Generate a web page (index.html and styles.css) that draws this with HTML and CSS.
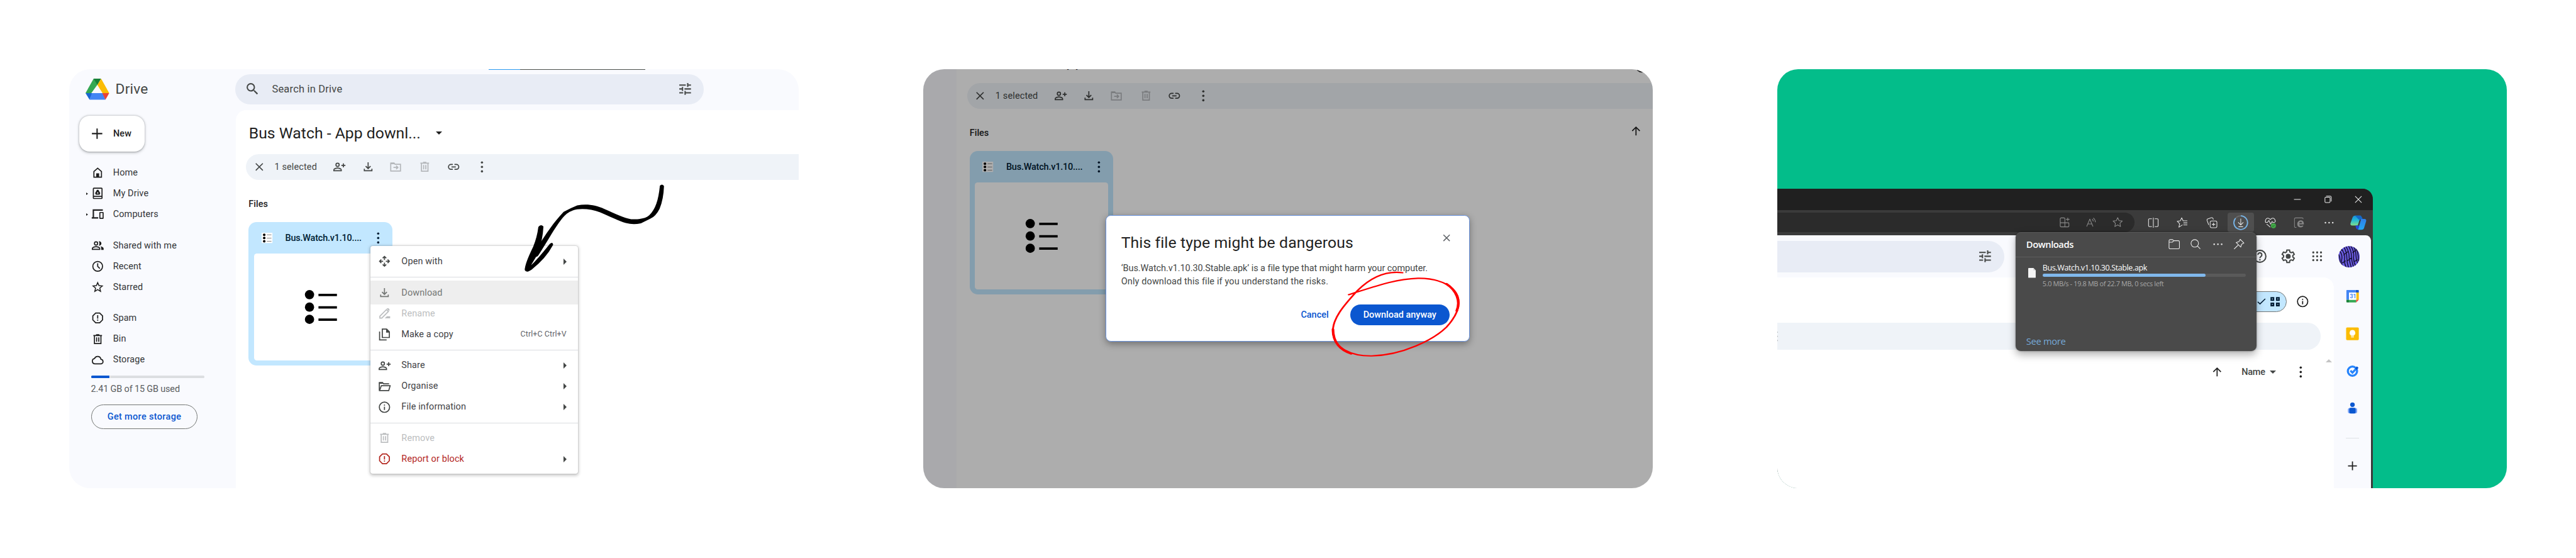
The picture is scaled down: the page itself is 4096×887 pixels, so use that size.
FILE: index.html
```
<!DOCTYPE html>
<html lang="en">
<head>
<meta charset="utf-8">
<title>Bus Watch download guide</title>
<link rel="stylesheet" href="styles.css">
</head>
<body>
<svg class="sprite" width="0" height="0" aria-hidden="true">
  <defs>
    <symbol id="search" viewBox="0 0 24 24"><path d="M15.5 14h-.79l-.28-.27A6.471 6.471 0 0 0 16 9.5 6.5 6.5 0 1 0 9.5 16c1.61 0 3.09-.59 4.23-1.57l.27.28v.79l5 4.99L20.49 19l-4.99-5zm-6 0C7.01 14 5 11.99 5 9.5S7.01 5 9.5 5 14 7.01 14 9.5 11.99 14 9.5 14z"/></symbol>
    <symbol id="tune" viewBox="0 0 24 24"><path d="M3 17v2h6v-2H3zM3 5v2h10V5H3zm10 16v-2h8v-2h-8v-2h-2v6h2zM7 9v2H3v2h4v2h2V9H7zm14 4v-2H11v2h10zm-6-4h2V7h4V5h-4V3h-2v6z"/></symbol>
    <symbol id="plus" viewBox="0 0 24 24"><path d="M12 4v16M4 12h16" class="s2"/></symbol>
    <symbol id="close" viewBox="0 0 24 24"><path d="M5.5 5.5l13 13M18.500 5.500l-13 13" class="s2"/></symbol>
    <symbol id="home" viewBox="0 0 24 24"><path d="M5 20.500V10l7-6 7 6v10.500z" class="s2"/><path d="M9.300 13.500h5.400V20.500H9.300z"/></symbol>
    <symbol id="mydrive" viewBox="0 0 24 24"><rect x="4" y="2.500" width="16" height="19" rx="1" class="s2"/><path d="M4 17.500h16" class="s2"/><path fill-rule="evenodd" d="M10.700 5.500h2.600l3.500 6-1.300 3h-7l-1.300-3zm1.300 3.700l-1.600 2.900h3.200z"/></symbol>
    <symbol id="computers" viewBox="0 0 24 24"><path d="M21.500 4.500H4v14M1 19h12" class="s25"/><rect x="16" y="9" width="6" height="11" rx=".6" class="s2"/></symbol>
    <symbol id="people" viewBox="0 0 24 24"><circle cx="9" cy="8.200" r="3" class="s2"/><path d="M2.200 19v-1.600c0-2.100 4.500-3.200 6.800-3.200s6.800 1.100 6.800 3.200V19z" class="s2"/><path d="M14 4.300a4 4 0 1 1 0 7.800c1.600-2 1.600-5.800 0-7.800zM17 13.500c3 .5 6 1.800 6 4V20h-4.500v-2.500c0-1.700-.5-3-1.500-4z"/></symbol>
    <symbol id="clock" viewBox="0 0 24 24"><circle cx="12" cy="12" r="9" class="s2"/><path d="M12 6.500V12l4 4" class="s2"/></symbol>
    <symbol id="star" viewBox="0 0 24 24"><path d="M12 3.700l2.400 5.700 6.100.5-4.600 4 1.400 6-5.300-3.200L6.700 19.900l1.400-6-4.600-4 6.100-.5z" class="s18"/></symbol>
    <symbol id="spam" viewBox="0 0 24 24"><path d="M8.300 3h7.400L21 8.300v7.400L15.700 21H8.300L3 15.700V8.300z" class="s2"/><path d="M11 7h2v6.500h-2zM11 15h2v2h-2z"/></symbol>
    <symbol id="trash" viewBox="0 0 24 24"><path d="M4 5h16M9 3.700h6M6 5v15h12V5M10 8.500v8M14 8.500v8" class="s2"/></symbol>
    <symbol id="cloud" viewBox="0 0 24 24"><path d="M7 19a5 5 0 0 1-.8-9.900 6.200 6.200 0 0 1 11.800 1.600A4.200 4.200 0 0 1 18.500 19z" class="s2"/></symbol>
    <symbol id="personadd" viewBox="0 0 24 24"><circle cx="9" cy="8.200" r="3" class="s2"/><path d="M2.200 19v-1.600c0-2.100 4.500-3.200 6.800-3.200s6.800 1.100 6.800 3.200V19z" class="s2"/><path d="M19.800 5.500v7.400M16 9.200h7.600" class="s2"/></symbol>
    <symbol id="download" viewBox="0 0 24 24"><path d="M12 3.500v11.500M7.500 10.500L12 15l4.500-4.500M5 15.500V19h14v-3.500" class="s2"/></symbol>
    <symbol id="foldermove" viewBox="0 0 24 24"><path d="M1.500 19.500V5h6l2 2h10v12.500z" class="s2"/><path d="M1.500 4h7v3h-7z"/><path d="M6.500 13h8M11.500 9.800l3.200 3.200-3.200 3.200" class="s2"/></symbol>
    <symbol id="link" viewBox="0 0 24 24"><path d="M10.500 7.500H7a4.500 4.500 0 0 0 0 9h3.500M13.500 7.500H17a4.500 4.500 0 0 1 0 9h-3.500M8 12h8" class="s2"/></symbol>
    <symbol id="more" viewBox="0 0 24 24"><circle cx="12" cy="3.800" r="2.100"/><circle cx="12" cy="12" r="2.100"/><circle cx="12" cy="20.200" r="2.100"/></symbol>
    <symbol id="openwith" viewBox="0 0 24 24"><path d="M12 9.500V3M8.700 6.200L12 3l3.300 3.200M12 14.500V21M8.700 17.800L12 21l3.300-3.200M9.500 12H3M6.200 8.700L3 12l3.200 3.300M14.500 12H21M17.800 8.700L21 12l-3.200 3.300" class="s2"/></symbol>
    <symbol id="rename" viewBox="0 0 24 24"><path d="M3.500 20.500v-3.600L15.600 4.800l3.600 3.600L7.100 20.500z" class="s2"/><path d="M16.500 17h6v4h-10zM15.800 2.800l5 5 .6-3.300-2.400-2.400z"/></symbol>
    <symbol id="copy" viewBox="0 0 24 24"><path d="M8 2.500h8l5 5V18H8zM3 7v15.500h13" class="s2"/><path d="M15 2v7h7z"/></symbol>
    <symbol id="folder" viewBox="0 0 24 24"><path d="M2.500 19.500V5h6l2 2h10M3 19.500l3.200-9H22.500l-2.600 9z" class="s2"/><path d="M2 4h7v3H2z"/></symbol>
    <symbol id="info" viewBox="0 0 24 24"><circle cx="12" cy="12" r="9.500" class="s2"/><path d="M11 11h2v6h-2zM11 7h2v2h-2z"/></symbol>
    <symbol id="up" viewBox="0 0 24 24"><path d="M12 20V5M5 11.800l7-7 7 7" class="s2"/></symbol>
    <symbol id="help" viewBox="0 0 24 24"><circle cx="12" cy="12" r="9.200" class="s2"/><path d="M9 9.800a3 3 0 1 1 4.800 2.300c-1.100.8-1.800 1.300-1.800 2.700M12 16.300v2" class="s2"/></symbol>
    <symbol id="gear" viewBox="0 0 24 24"><path d="M10 2.500h4l.6 2.900 1.900 1.100 2.800-1 2 3.500-2.200 1.900v2.200l2.200 1.900-2 3.500-2.800-1-1.900 1.100-.6 2.900h-4l-.6-2.900-1.900-1.100-2.800 1-2-3.500 2.200-1.900v-2.200L2.700 9l2-3.500 2.800 1 1.900-1.100z" class="s2"/><circle cx="12" cy="12" r="3.800"/></symbol>
    <symbol id="apps" viewBox="0 0 24 24"><path d="M4 4h.01M12 4h.01M20 4h.01M4 12h.01M12 12h.01M20 12h.01M4 20h.01M12 20h.01M20 20h.01" class="dots"/></symbol>
    <symbol id="list" viewBox="0 0 230 185"><circle cx="96" cy="71.300" r="8"/><circle cx="96" cy="92.800" r="8"/><circle cx="96" cy="114" r="8"/><path d="M111.500 69.800h32v4h-32zM111.500 91.200h32v4h-32zM111.500 112.500h32v4h-32z"/></symbol>
    <symbol id="thumb" viewBox="0 0 19 18"><path fill="#fff" d="M0 0h19v18H0z"/><circle cx="4.500" cy="3.500" r="2.200"/><circle cx="4.500" cy="9" r="2.200"/><circle cx="4.500" cy="14.600" r="2.200"/><path fill="#888" d="M9 3h8v1.200H9zM9 8.600h8v1.200H9zM9 14.100h8v1.200H9z"/></symbol>
    <linearGradient id="cpa" x1="0" y1="0" x2="0" y2="1"><stop offset="0" stop-color="#1b8fd6"/><stop offset=".45" stop-color="#22b8d8"/><stop offset="1" stop-color="#7fe08a"/></linearGradient>
    <linearGradient id="cpb" x1="0" y1="0" x2="0" y2="1"><stop offset="0" stop-color="#2f7fe8"/><stop offset="1" stop-color="#22a7f2"/></linearGradient>
    <clipPath id="round"><circle cx="19" cy="19" r="18.700"/></clipPath>
  </defs>
</svg>

<main class="page">
  <section class="card drive">
    <aside class="sidebar">
      <div class="brand">
        <svg class="logo" viewBox="0 0 41 36.500" preserveAspectRatio="none"><path fill="#34a853" d="M14 0h6.500l2 8L10 25H0z"/><path fill="#188038" d="M14 0h13l-6.500 11z"/><path fill="#fbbc04" d="M27 0l14 25H29.500L20.500 11z"/><path fill="#1967d2" d="M0 25h12L7 36.500z"/><path fill="#4285f4" d="M11 25h19l4.500 11.500H7z"/><path fill="#ea4335" d="M29 25h12l-6.500 11.500z"/></svg>
        <span class="brand-name">Drive</span>
      </div>
      <button class="new"><svg class="i27"><use href="#plus"/></svg><span>New</span></button>
      <nav class="nav">
        <a class="nav-row"><i></i><svg class="i"><use href="#home"/></svg><span>Home</span></a>
        <a class="nav-row"><i class="twist"></i><svg class="i"><use href="#mydrive"/></svg><span>My Drive</span></a>
        <a class="nav-row"><i class="twist"></i><svg class="i"><use href="#computers"/></svg><span>Computers</span></a>
        <a class="nav-row first"><i></i><svg class="i"><use href="#people"/></svg><span>Shared with me</span></a>
        <a class="nav-row"><i></i><svg class="i"><use href="#clock"/></svg><span>Recent</span></a>
        <a class="nav-row"><i></i><svg class="i"><use href="#star"/></svg><span>Starred</span></a>
        <a class="nav-row first"><i></i><svg class="i"><use href="#spam"/></svg><span>Spam</span></a>
        <a class="nav-row"><i></i><svg class="i"><use href="#trash"/></svg><span>Bin</span></a>
        <a class="nav-row"><i></i><svg class="i"><use href="#cloud"/></svg><span>Storage</span></a>
      </nav>
      <div class="quota"><div class="quota-used"></div></div>
      <p class="quota-text">2.41 GB of 15 GB used</p>
      <button class="more-storage">Get more storage</button>
    </aside>
    <div class="column">
      <header class="topbar">
        <div class="searchbox"><svg class="i27"><use href="#search"/></svg><span>Search in Drive</span><svg class="i27 end"><use href="#tune"/></svg></div>
      </header>
      <div class="content">
        <div class="crumbs"><h1>Bus Watch - App downl...</h1><i class="down"></i></div>
        <div class="selection">
          <svg class="i"><use href="#close"/></svg><span>1 selected</span>
          <div class="tools"><svg class="i"><use href="#personadd"/></svg><svg class="i"><use href="#download"/></svg><svg class="i off"><use href="#foldermove"/></svg><svg class="i off"><use href="#trash"/></svg><svg class="i"><use href="#link"/></svg><svg class="i"><use href="#more"/></svg></div>
        </div>
        <div class="files-head"><h2>Files</h2></div>
        <article class="file">
          <div class="file-head"><svg class="thumb"><use href="#thumb"/></svg><span>Bus.Watch.v1.10....</span><svg class="i"><use href="#more"/></svg></div>
          <div class="preview"><svg><use href="#list"/></svg></div>
        </article>
      </div>
    </div>
    <div class="strip"></div>
    <div class="menu">
      <div class="item"><svg class="i"><use href="#openwith"/></svg><span>Open with</span><i class="right"></i></div>
      <hr>
      <div class="item active"><svg class="i"><use href="#download"/></svg><span>Download</span></div>
      <div class="item dim"><svg class="i"><use href="#rename"/></svg><span>Rename</span></div>
      <div class="item"><svg class="i"><use href="#copy"/></svg><span>Make a copy</span><kbd>Ctrl+C Ctrl+V</kbd></div>
      <hr>
      <div class="item"><svg class="i"><use href="#personadd"/></svg><span>Share</span><i class="right"></i></div>
      <div class="item"><svg class="i"><use href="#folder"/></svg><span>Organise</span><i class="right"></i></div>
      <div class="item"><svg class="i"><use href="#info"/></svg><span>File information</span><i class="right"></i></div>
      <hr>
      <div class="item dim"><svg class="i"><use href="#trash"/></svg><span>Remove</span></div>
      <div class="item danger"><svg class="i"><use href="#spam"/></svg><span>Report or block</span><i class="right"></i></div>
    </div>
    <svg class="arrow" viewBox="0 0 1568 1140" preserveAspectRatio="none">
      <path d="M958 664Q967 652 975 666Q973 735 957 783Q942 822 918 836L880 859Q850 868 818 858C790 847 752 824 712 802C675 783 625 780 600 792C580 802 570 812 556 834C520 892 500 945 458 1026Q448 1042 439 1024Q440 1005 456 980C490 915 520 855 562 800Q590 780 618 766C660 757 695 765 730 785C775 810 810 832 840 838C875 840 900 834 914 818C940 785 952 740 958 664Z"/>
      <path d="M458 878Q468 862 479 876Q476 950 455 1020L428 1077Q455 1045 505 966Q517 953 519 970Q490 1040 430 1100Q408 1119 402 1102Q402 1070 437 980Q453 930 458 878Z"/>
    </svg>
  </section>

  <section class="card warn">
    <div class="rail"></div>
    <div class="content shifted">
      <div class="crumbs"><h1>Bus Watch - App downl...</h1><i class="down"></i></div>
      <div class="selection">
        <svg class="i"><use href="#close"/></svg><span>1 selected</span>
        <div class="tools"><svg class="i"><use href="#personadd"/></svg><svg class="i"><use href="#download"/></svg><svg class="i off"><use href="#foldermove"/></svg><svg class="i off"><use href="#trash"/></svg><svg class="i"><use href="#link"/></svg><svg class="i"><use href="#more"/></svg></div>
      </div>
      <div class="files-head"><h2>Files</h2><svg class="i"><use href="#up"/></svg></div>
      <article class="file">
        <div class="file-head"><svg class="thumb"><use href="#thumb"/></svg><span>Bus.Watch.v1.10....</span><svg class="i"><use href="#more"/></svg></div>
        <div class="preview"><svg><use href="#list"/></svg></div>
      </article>
    </div>
    <svg class="corner-ring" viewBox="0 0 24 24"><circle cx="12" cy="12" r="10" class="s2"/></svg>
    <div class="scrim"></div>
    <div class="dialog">
      <div class="dialog-head"><h3>This file type might be dangerous</h3><svg class="x"><use href="#close"/></svg></div>
      <p><span class="tight">‘Bus.Watch.v1.10.30.Stable.apk’ is a file type that might harm your computer.</span><br>Only download this file if you understand the risks.</p>
      <div class="actions"><button class="text">Cancel</button><button class="primary">Download anyway</button></div>
    </div>
    <svg class="ring" viewBox="0 0 1568 900" preserveAspectRatio="none">
      <path stroke-width="7" d="M1230 397C1160 385 1100 430 1055 490C1000 570 955 640 960 710C968 790 1030 830 1110 829C1230 826 1350 745 1400 680C1445 615 1455 565 1444 520C1425 455 1360 425 1290 426C1200 430 1130 465 1021 511"/>
      <path stroke-width="10" d="M960 690C960 760 990 800 1030 817M1400 455C1440 490 1456 545 1440 595"/>
    </svg>
  </section>

  <section class="card browser">
    <div class="window">
      <div class="titlebar">
        <div class="cap"><svg viewBox="0 0 14 14"><path class="l" d="M.7 7h12.600"/></svg></div>
        <div class="cap"><svg viewBox="0 0 14 14"><rect class="l" x="1" y="3" width="9.500" height="10" rx="1.500"/><path class="l" d="M3.200 1h7.300a2.200 2.200 0 0 1 2.200 2.200V11"/></svg></div>
        <div class="cap"><svg viewBox="0 0 14 14"><path class="l" d="M1 1l12 12M13 1L1 13"/></svg></div>
      </div>
      <div class="toolbar">
        <div class="address">
          <div><svg viewBox="0 0 18 18"><path class="l" d="M1 4V15.500a1.500 1.500 0 0 0 1.500 1.500H14.500a1.500 1.500 0 0 0 1.500-1.500V11a1 1 0 0 0-1-1H1M9 17V3a1.500 1.500 0 0 0-1.500-1.500h-5A1.500 1.500 0 0 0 1 3v1M14 1v6M11 4h6"/></svg></div>
          <div><svg viewBox="0 0 18 18"><path class="l" d="M1 16.500L6.500 3.500 12 16.500M2.800 12h7.400M10.500 3.500c1.200 1 1.800 2.200 2 4M12.500 1.500c2 1.600 3.400 4 3.600 7.500"/></svg></div>
          <div><svg viewBox="0 0 18 18"><path class="l" d="M9 1l2.400 5.200 5.600.7-4.100 3.900 1 5.700L9 13.700l-4.900 2.800 1-5.700L1 6.900l5.600-.7z"/></svg></div>
        </div>
        <div class="ext">
          <div><svg viewBox="0 0 20 20"><path class="l" d="M10 1v18M7.500 3H3a1.500 1.500 0 0 0-1.500 1.500v11A1.500 1.500 0 0 0 3 17h4.500M12.500 3H17a1.500 1.500 0 0 1 1.500 1.500v11A1.500 1.500 0 0 1 17 17h-4.500"/></svg></div>
          <div><svg viewBox="0 0 20 20"><path class="l" d="M10.500 13.800L4 18l1.300-6.200L1 7.500l5.500-.7L9 1.500l2.500 5.300H19M12 10.500h7M12 14h7"/></svg></div>
          <div><svg viewBox="0 0 20 20"><rect class="l" x="7" y="7" width="12" height="12" rx="2.500"/><path class="l" d="M13 10v6M10 13h6M4.500 14L1.500 6a2 2 0 0 1 1.200-2.600L9.500 1.200a2 2 0 0 1 2.500 1.300l.8 2"/></svg></div>
          <div class="hot"><svg class="big" viewBox="0 0 26 26"><circle class="track" cx="13" cy="13" r="11.800"/><path class="prog" d="M13 1.200A11.800 11.800 0 1 1 4 5.300"/><path class="l" d="M13 6v10.500M8.500 12.500L13 17l4.500-4.500M9 20h8"/></svg></div>
          <div><svg viewBox="0 0 20 20"><path class="l" d="M1.500 9C.5 5 3 2 5.500 2S9 3.500 10 4.500C11 3.500 12 2 14.500 2S19.500 5 18.500 9M1 9.500h4L7.500 6l3 6.500L13 8l1.500 1.500H18M3.500 12.500L10 18"/><circle cx="15.500" cy="15.500" r="4.500" fill="#43a848"/><path d="M13.300 15.500l1.600 1.600 2.700-3" stroke="#263" fill="none"/></svg></div>
          <div class="faded"><svg viewBox="0 0 20 20"><path class="l" d="M5 18.500H3.500A2 2 0 0 1 1.500 16.500V3A2 2 0 0 1 3.500 1.500H15A2 2 0 0 1 17 3.500"/><path d="M17.500 15.500c-1 2-2.700 3-5 3-3.500 0-6-2-6-5.800 0-3.900 2.700-6.700 6.200-6.700 3.800 0 5.800 2.600 5.500 7.200H10c.2 1.800 1.300 2.700 3 2.700 1.100 0 1.900-.3 2.300-.9zM10 10.800h5c-.2-1.500-1-2.300-2.300-2.300-1.500 0-2.400.8-2.700 2.300z" fill="currentColor"/></svg></div>
          <div><svg viewBox="0 0 20 20"><path class="dots3" d="M4 10h.01M10.500 10h.01M17 10h.01"/></svg></div>
          <div><svg class="copilot" viewBox="0 0 28 26"><path fill="url(#cpa)" d="M8.500.8h10L13 18H3.500Q-.5 18 .5 14L4 4Q5.200.8 8.500.8z"/><path fill="#1467c8" d="M8.500.8h8q3 0 4 3L22 8h-7z"/><path fill="url(#cpb)" d="M19 6.500h5.500q4 0 3 4L24 22q-1 3.200-4.500 3.200H13.500z"/><path fill="#2547d8" d="M9 18h6.500l-2 7.200Q11 25 10 22z"/></svg></div>
        </div>
      </div>
      <div class="webpage">
        <header class="web-head">
          <div class="pill"><svg class="i27"><use href="#tune"/></svg></div>
          <div class="account"><svg class="i27"><use href="#help"/></svg><svg class="i27"><use href="#gear"/></svg><svg class="i27 apps"><use href="#apps"/></svg>
            <svg class="avatar" viewBox="0 0 38 38"><g clip-path="url(#round)"><path fill="#6a5be0" d="M0 0h38v38H0z"/><path fill="none" stroke="#120f2c" stroke-width="1.500" d="M2 8q6 8 4 16t4 14M5 4q7 10 6 18t3 16M10 2q5 9 5 18t3 18M13 0q6 10 6 18t4 20M18 0q5 9 5 17t4 20M22 0q6 9 5 18t4 18M27 1q4 8 4 15t3 14M31 4q4 7 4 14t2 10M0 14q4 6 3 18M8 8l-6-2M9 16l8-6M16 26l7-5M25 12l6-5M27 28l7-4M7 30l6-4"/></g></svg></div>
        </header>
        <div class="web-body">
          <div class="web-main">
            <div class="views"><div class="toggle"><svg viewBox="0 0 16 12"><path d="M1 6.500l4.300 4L15 1" class="s18"/></svg><svg viewBox="0 0 17 17"><path d="M1.500 1.500h4v4h-4zM11 1.500h4v4h-4zM1.500 11h4v4h-4zM11 11h4v4h-4z" class="s25"/></svg></div><svg class="i"><use href="#info"/></svg></div>
            <div class="web-bar"><svg class="i"><use href="#more"/></svg></div>
            <div class="sort"><svg class="i"><use href="#up"/></svg><span>Name</span><i class="down"></i><svg class="i"><use href="#more"/></svg></div>
            <i class="scroll-up"></i>
          </div>
          <div class="side">
            <svg viewBox="0 0 23 23"><path fill="#4285f4" d="M1 2q0-1 1-1h15v4.500H5.500V18H1z"/><path fill="#1a56c8" d="M17 1h4.500q1 0 1 1v3.500H17z"/><path fill="#fbbc04" d="M18 5.500h4.500V18H18z"/><path fill="#34a853" d="M5.500 18H18v4.500H5.500z"/><path fill="#188038" d="M1 18h4.500v4.500H2q-1 0-1-1z"/><path fill="#ea4335" d="M18 18h4.500L18 22.500z"/><path fill="#fff" d="M5.500 5.500H18V18H5.500z"/><text x="7" y="15.500">31</text></svg>
            <svg viewBox="0 0 23 23"><rect x=".5" y=".5" width="22" height="22" rx="1.800" fill="#fbbc04"/><path fill="#fff" d="M11.500 5a5 5 0 0 0-2.500 9.300V15h5v-.7A5 5 0 0 0 11.500 5zM9 16h5v1.700H9z"/></svg>
            <svg viewBox="0 0 23 23"><circle cx="11.500" cy="12" r="8" fill="none" stroke="#2684fc" stroke-width="3.600"/><path d="M8 11l3.500 3.500 9-9.500" fill="none" stroke="#2684fc" stroke-width="3.600"/><path d="M17.500 8.500l3-3.500" stroke="#0b57d0" stroke-width="3.600"/></svg>
            <svg viewBox="0 0 23 23"><circle cx="11.500" cy="5.800" r="4" fill="#0b57d0"/><rect x="3.600" y="11.500" width="16" height="9.500" rx="3.500" fill="#7ba4f7"/><rect x="6" y="11.300" width="11" height="9.700" rx="2.500" fill="#0b57d0"/></svg>
            <hr><svg class="add" viewBox="0 0 24 24"><use href="#plus"/></svg>
          </div>
        </div>
      </div>
    </div>
    <div class="downloads">
      <div class="dl-head"><b>Downloads</b>
        <svg viewBox="0 0 20 20"><path class="l" d="M1 6V4a2 2 0 0 1 2-2h4l2.500 2H17a2 2 0 0 1 2 2v10a2 2 0 0 1-2 2H3a2 2 0 0 1-2-2zM1 6.500h5.500L9.500 4"/></svg>
        <svg viewBox="0 0 20 20"><circle class="l" cx="8.500" cy="8.500" r="6.500"/><path class="l" d="M13.200 13.200L18 18"/></svg>
        <svg viewBox="0 0 20 20"><path class="dots3" d="M4 10h.01M10.500 10h.01M17 10h.01"/></svg>
        <svg viewBox="0 0 20 20"><path class="l" d="M12 1.500L18.500 8l-4 2-1.500 5-8-8 5-1.500zM9 11l-7.500 7.500"/></svg>
      </div>
      <div class="dl-item">
        <svg viewBox="0 0 13 17"><path fill="#f5f5f5" d="M1 0h8l4 4v12q0 1-1 1H1q-1 0-1-1V1q0-1 1-1z"/><path fill="#cfcfcf" d="M9 0l4 4H9z"/></svg>
        <div class="dl-info"><span class="dl-name">Bus.Watch.v1.10.30.Stable.apk</span><div class="dl-bar"><div></div></div><span class="dl-stat">5.0 MB/s - 19.8 MB of 22.7 MB, 0 secs left</span></div>
      </div>
      <a class="see">See more</a>
    </div>
  </section>
</main>
</body>
</html>
```
FILE: styles.css
```
* { box-sizing: border-box; }
body { margin: 0; background: #fff; font-family: Roboto, "Liberation Sans", sans-serif; overflow: hidden; }
h1, h2, h3, p { margin: 0; font-weight: 400; }
button { border: 0; padding: 0; font: inherit; background: none; }
svg { display: block; flex: none; fill: currentColor; overflow: visible; }
.sprite { position: absolute; }
.s2, .s18, .s25 { fill: none; stroke: currentColor; stroke-width: 2; }
.s18 { stroke-width: 1.8; }
.s25 { stroke-width: 2.5; }
.dots { stroke: currentColor; stroke-width: 4.4; stroke-linecap: round; }
.dots3 { stroke: currentColor; stroke-width: 2.8; stroke-linecap: round; }
.l { fill: none; stroke: currentColor; stroke-width: 1.2; stroke-linejoin: round; }
.i { width: 22.5px; height: 22.5px; }
.i27 { width: 27px; height: 27px; }

.page { zoom: 0.91818; width: 4461px; height: 966px; padding: 120px 0 0 120px; display: flex; gap: 216px; font-size: 15.75px; }
.card { position: relative; flex: none; width: 1263px; height: 724.7px; border-radius: 36px; overflow: hidden; display: flex; }

/* Drive window */
.drive { background: #f9fafe; border-bottom-right-radius: 0; }
.sidebar { width: 288px; color: #1f1f1f; display: flex; flex-direction: column; align-items: flex-start; }
.brand { height: 68px; padding-left: 28px; display: flex; align-items: center; gap: 11px; }
.logo { width: 41px; height: 36.5px; }
.brand-name { font-size: 24.75px; letter-spacing: .18px; color: #444746; }
.new { margin: 12px 0 18px 17px; width: 113.5px; height: 63px; padding-left: 18px; border-radius: 18px; background: #fff; box-shadow: 0 1px 3px rgba(60,64,67,.4), 0 2px 5px 1px rgba(60,64,67,.14); display: flex; align-items: center; gap: 14px; font-weight: 500; letter-spacing: .2px; color: #1f1f1f; }
.nav-row { height: 36px; display: grid; grid-template-columns: 37.75px 22.5px auto; align-items: center; letter-spacing: .13px; }
.nav-row span { padding-left: 15.5px; color: #333537; }
.nav-row.first { margin-top: 18px; }
.twist { margin-left: 29.5px; width: 0; border: solid transparent; border-width: 3.2px 0 3.2px 3.6px; border-left-color: #1f1f1f; }
.quota { margin: 9px 0 0 38px; width: 195.5px; height: 5px; border-radius: 2px; background: #dcdee1; }
.quota-used { width: 33px; height: 5px; background: #0b57d0; border-radius: 2px 0 0 2px; border-right: 2px solid #f9fafe; }
.quota-text { margin: 10px 0 15px 37.5px; line-height: 20px; letter-spacing: -.17px; color: #5a5d60; }
.more-storage { margin-left: 38px; width: 184px; height: 42.5px; border: 1px solid #747775; border-radius: 22px; color: #0b57d0; font-weight: 500; letter-spacing: .39px; }
.column { flex: 1; display: flex; flex-direction: column; }
.topbar { height: 71px; padding-top: 8px; }
.searchbox { width: 812px; height: 53px; margin-left: -1px; padding: 0 19px 0 17px; border-radius: 27px; background: #e8ecf5; display: flex; align-items: center; gap: 20px; font-size: 18px; letter-spacing: .2px; color: #444746; }
.end { margin-left: auto; }
.content { flex: 1; background: #fff; border-top-left-radius: 18px; color: #1f1f1f; }
.crumbs { height: 76px; padding: 2px 0 0 23px; display: flex; align-items: center; gap: 26px; }
.crumbs h1 { font-size: 27px; line-height: 34px; }
.down { border: solid transparent; border-width: 5.6px 5.6px 0; border-top-color: currentColor; }
.selection { margin-left: 18px; height: 45px; padding-left: 11.4px; border-radius: 23px 0 0 23px; background: #eff3f8; color: #444746; display: flex; align-items: center; gap: 15.5px; letter-spacing: .15px; }
.selection span { width: 73.5px; white-space: nowrap; }
.tools { margin-left: 12px; display: flex; gap: 27px; }
.off { color: #b4b7ba; }
.files-head { height: 73px; padding: 32.5px 17.5px 0 22.6px; display: flex; justify-content: space-between; }
.files-head h2 { font-size: 15.75px; line-height: 20px; font-weight: 500; }
.files-head svg { margin-top: -6px; }
.file { margin-left: 22.6px; width: 249px; height: 248.3px; padding: 0 9.4px; border-radius: 14px; background: #c2e7ff; color: #001d35; }
.file-head { height: 54px; padding: 0 4px 0 13px; display: flex; align-items: center; font-weight: 500; letter-spacing: -.22px; }
.file-head span { margin-left: 22px; flex: 1; white-space: nowrap; }
.thumb { width: 19px; height: 18px; color: #000; }
.preview { height: 185px; border-radius: 5px; background: #fff; color: #000; }
.preview svg { width: 230px; height: 185px; }
.strip { position: absolute; left: 726.5px; top: 0; width: 270.5px; height: 1.3px; background: linear-gradient(90deg, #2b9af0 54px, #4a4f4a 54px); }

.menu { position: absolute; left: 521.7px; top: 305.7px; width: 359.3px; height: 394.5px; padding-top: 9px; border-radius: 4px; background: #fff; box-shadow: 0 2px 6px 1px rgba(0,0,0,.22), 0 0 2px rgba(0,0,0,.25); color: #444746; }
.item { height: 36px; padding: 0 20px 0 13.3px; display: flex; align-items: center; letter-spacing: .12px; }
.item span { margin-left: 17.8px; flex: 1; color: #3f4245; }
.item.active { margin: -3px 0; height: 42px; background: #eee; color: #747775; }
.item.active span { color: #747775; }
.item.dim, .item.dim span { color: #bcbec0; }
.item.danger, .item.danger span { color: #b3261e; }
.item kbd { font: 13.5px Roboto, sans-serif; color: #5f6368; }
.menu hr { margin: 9px 0 8px; border: 0; height: 1px; background: #dadce0; }
.right { border: solid transparent; border-width: 5.6px 0 5.6px 6px; border-left-color: #444746; }
.arrow { position: absolute; left: 620px; top: -20px; width: 660px; height: 380px; color: #000; }

/* Warning dialog */
.warn { background: #fff; }
.rail { width: 57.6px; background: #f9fafe; }
.shifted { margin-top: -52.3px; border-radius: 0; }
.corner-ring { position: absolute; left: 1233px; top: -16px; width: 23px; height: 23px; color: #333; }
.scrim { position: absolute; inset: 0; background: rgba(0,0,0,.32); }
.dialog { position: absolute; left: 316px; top: 252.3px; width: 630.5px; height: 219.5px; padding: 32px 34px 0 25.5px; border: 2px solid #6a94e0; border-radius: 9px; background: #fff; box-shadow: 0 4px 12px rgba(0,0,0,.35); color: #1f1f1f; }
.dialog-head { display: flex; justify-content: space-between; }
.dialog-head h3 { font-size: 27px; line-height: 30px; letter-spacing: .1px; }
.x { width: 20px; height: 20px; margin: -4px -5px 0 0; color: #5f6368; }
.dialog p { margin-top: 19px; line-height: 22.5px; letter-spacing: .145px; white-space: nowrap; color: #444746; }
.tight { letter-spacing: -.06px; }
.actions { margin-top: 28px; display: flex; justify-content: flex-end; align-items: center; gap: 37px; font-weight: 500; letter-spacing: .41px; }
.text { color: #0b57d0; }
.primary { width: 172.5px; height: 36px; border-radius: 18px; background: #0b57d0; color: #fff; }
.ring { position: absolute; left: 281px; top: 220px; width: 700px; height: 300px; fill: none; stroke: #f00; stroke-linecap: round; }

/* Browser window */
.browser { background: #03bd8a; align-items: flex-start; }
.window { margin-top: 206.3px; width: 1031px; height: 518.7px; border-radius: 0 18px 0 0; overflow: hidden; background: #3b3b3b; display: flex; flex-direction: column; box-shadow: inset 5px 1px 0 -4px #3b3b3b; }
.titlebar { height: 37px; background: #202020; color: #eee; display: flex; justify-content: flex-end; }
.cap { width: 53px; display: grid; place-items: center; position: relative; left: 2px; }
.cap svg { width: 13px; height: 13px; }
.toolbar { height: 44.4px; padding-top: 5px; display: flex; color: #e3e3e3; }
.address { width: 622px; height: 34px; padding-right: 6px; border-radius: 0 17px 17px 0; background: #2b2b2b; color: #8a8a8a; display: flex; justify-content: flex-end; }
.address div { width: 46.2px; display: grid; place-items: center; }
.address svg { width: 18px; height: 18px; }
.ext { margin-left: 6.5px; display: flex; height: 34px; }
.ext div { width: 46px; margin: 0 2.35px; display: grid; place-items: center; }
.ext svg { width: 19.5px; height: 19.5px; }
.ext .hot { background: #4f4f4f; border-radius: 4px; }
.ext .big { width: 26px; height: 26px; }
.track { fill: none; stroke: #6a6a6a; stroke-width: 1.8; }
.prog { fill: none; stroke: #76b5ea; stroke-width: 2; }
.ext .faded { color: #858585; }
.ext .copilot { width: 28px; height: 26px; }
.webpage { flex: 1; width: 1028.5px; background: #f9fafe; border-top-right-radius: 9px; display: flex; flex-direction: column; color: #444746; }
.web-head { height: 73px; display: flex; justify-content: space-between; align-items: center; padding-right: 19.7px; }
.pill { width: 393px; height: 55px; padding-right: 20px; border-radius: 0 28px 28px 0; background: #e8ecf5; display: flex; justify-content: flex-end; align-items: center; }
.account { display: flex; align-items: center; gap: 22.9px; }
.apps { padding: 3.5px; }
.avatar { width: 37.5px; height: 37.5px; }
.web-body { flex: 1; display: flex; }
.web-main { position: relative; width: 963.7px; background: #fff; border-top-right-radius: 18px; color: #1f1f1f; }
.views { height: 78.6px; padding: 5px 43.1px 0 0; display: flex; justify-content: flex-end; align-items: center; gap: 16.3px; }
.toggle { width: 110px; height: 36.5px; padding-right: 10px; border: 1px solid #747775; border-radius: 18px; background: #c2e7ff; color: #001d35; display: flex; justify-content: flex-end; align-items: center; gap: 8px; }
.toggle svg:first-child { width: 15px; height: 11.5px; }
.toggle svg:last-child { width: 17px; height: 17px; }
.web-bar { width: 940.4px; height: 46px; border-radius: 0 23px 23px 0; background: #eff3f8; display: flex; align-items: center; overflow: hidden; }
.web-bar svg { margin-left: -12px; width: 21px; height: 21px; }
.sort { height: 77.4px; padding-right: 45.7px; display: flex; justify-content: flex-end; align-items: center; font-weight: 500; }
.sort span { margin: 0 8.5px 0 31px; letter-spacing: -.3px; color: #444746; }
.sort .down { margin-right: 31.5px; color: #444746; }
.sort svg { width: 22.5px; }
.scroll-up { position: absolute; right: 2.7px; top: 141.3px; border: solid transparent; border-width: 0 6px 6.5px; border-bottom-color: #c4c4c4; }
.side { flex: 1; padding-top: 20.8px; display: flex; flex-direction: column; align-items: center; gap: 41.6px; }
.side svg { width: 23px; height: 23px; }
.side text { font: 700 9.5px Roboto, sans-serif; fill: #4285f4; }
.side hr { width: 23.5px; height: 1px; margin: -2px 0 -5.5px; border: 0; background: #dfe1e6; }
.side .add { width: 23px; color: #1f1f1f; }

.downloads { position: absolute; left: 413px; top: 282px; width: 416.7px; height: 206px; border-radius: 9px; border-top: 1px solid #5a5a5a; background: #4a4a4a; box-shadow: 0 6px 14px rgba(0,0,0,.3), 0 0 3px rgba(0,0,0,.4); color: #fff; font-family: "Open Sans", sans-serif; display: flex; flex-direction: column; }
.dl-head { height: 42px; padding: 0 20px 2px 18px; border-bottom: 1px solid #5e5e5e; display: flex; align-items: center; gap: 17.5px; color: #eaeaea; }
.dl-head b { flex: 1; font-size: 16px; font-weight: 600; letter-spacing: -.47px; color: #fff; }
.dl-head svg { width: 20px; height: 20px; }
.dl-item { padding: 9px 18px 0 21px; display: flex; gap: 12.3px; }
.dl-item > svg { width: 13px; height: 17px; margin-top: 10px; }
.dl-info { flex: 1; display: flex; flex-direction: column; white-space: nowrap; }
.dl-name { font-size: 13.6px; line-height: 20px; letter-spacing: -.4px; }
.dl-bar { height: 5px; border-radius: 3px; background: #5a5a5a; }
.dl-bar div { width: 80%; height: 5px; border-radius: 3px; background: #80b8ec; }
.dl-stat { margin-top: 4px; font-size: 11.8px; line-height: 16px; letter-spacing: -.35px; color: #a8a8a8; }
.see { margin: auto 0 7px 18px; font-size: 16px; line-height: 22px; letter-spacing: -.35px; color: #76a9d8; }
```
